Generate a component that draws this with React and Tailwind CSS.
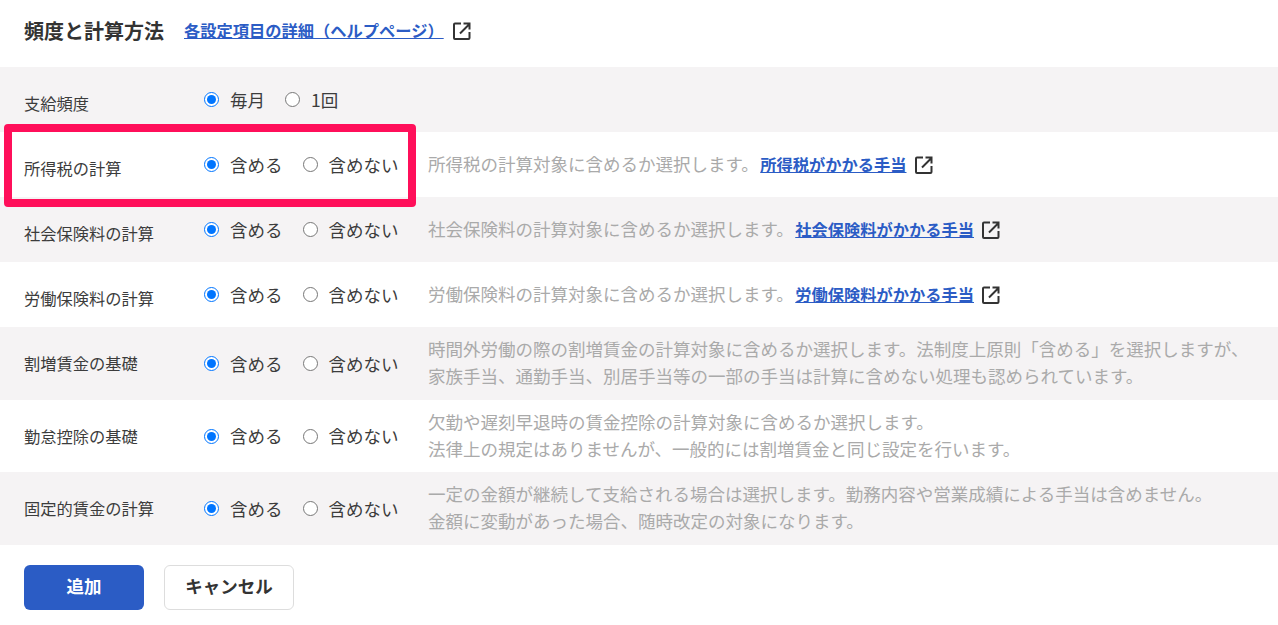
const rows = [
  { label: '支給頻度', options: ['毎月', '1回'], h: 'h-[65px]', gray: true },
  {
    label: '所得税の計算', h: 'h-[65px]',
    desc: ['所得税の計算対象に含めるか選択します。'], link: '所得税がかかる手当',
  },
  {
    label: '社会保険料の計算', h: 'h-[65px]', gray: true,
    desc: ['社会保険料の計算対象に含めるか選択します。'], link: '社会保険料がかかる手当',
  },
  {
    label: '労働保険料の計算', h: 'h-[65px]',
    desc: ['労働保険料の計算対象に含めるか選択します。'], link: '労働保険料がかかる手当',
  },
  {
    label: '割増賃金の基礎', h: 'h-[73px]', gray: true,
    desc: [
      '時間外労働の際の割増賃金の計算対象に含めるか選択します。法制度上原則「含める」を選択しますが、',
      '家族手当、通勤手当、別居手当等の一部の手当は計算に含めない処理も認められています。',
    ],
  },
  {
    label: '勤怠控除の基礎', h: 'h-[72px]',
    desc: [
      '欠勤や遅刻早退時の賃金控除の計算対象に含めるか選択します。',
      '法律上の規定はありませんが、一般的には割増賃金と同じ設定を行います。',
    ],
  },
  {
    label: '固定的賃金の計算', h: 'h-[73px]', gray: true,
    desc: [
      '一定の金額が継続して支給される場合は選択します。勤務内容や営業成績による手当は含めません。',
      '金額に変動があった場合、随時改定の対象になります。',
    ],
  },
];

function ExternalIcon() {
  return (
    <svg width="20" height="20" viewBox="0 0 20 20" fill="none" stroke="#333" strokeWidth="2" className="shrink-0">
      <path d="M9 2.5H3a1 1 0 0 0-1 1V17a1 1 0 0 0 1 1h13.5a1 1 0 0 0 1-1v-6" />
      <path d="M8 12.5L17 3.5M11.5 2.5h6V8.5" />
    </svg>
  );
}

function Radio({ checked, label, name }) {
  return (
    <label className="flex items-center gap-[11px]">
      <input type="radio" name={name} defaultChecked={checked} className="m-0 w-[15px] h-[15px] accent-[#0075ff]" />
      <span className="text-[17.5px] leading-[24px] text-[#3c3c3c]">{label}</span>
    </label>
  );
}

function Row({ row, index }) {
  const opts = row.options || ['含める', '含めない'];
  return (
    <div className={`flex items-center ${row.h} ${row.gray ? 'bg-[#f5f3f4]' : 'bg-white'}`}>
      <div className="self-start w-[204px] pl-6 pt-6 shrink-0 text-[16.25px] leading-6 text-[#3c3c3c]">{row.label}</div>
      <div className="flex items-center gap-5 shrink-0 w-[224px]">
        <Radio name={`r${index}`} checked label={opts[0]} />
        <Radio name={`r${index}`} label={opts[1]} />
      </div>
      {row.desc && (
        <div className="pb-[3px] text-[17.5px] leading-[27px] text-[#aaaaaa] whitespace-nowrap [text-spacing-trim:space-all]">
          {row.desc.map((line, i) => (
            <div key={i} className="flex items-center">
              {line}
              {row.link && (
                <>
                  <a href="#" className="ml-[1.5px] mt-[2px] text-[16.25px] font-bold text-[#2b5cc5] underline">{row.link}</a>
                  <span className="ml-[7px] mt-1"><ExternalIcon /></span>
                </>
              )}
            </div>
          ))}
        </div>
      )}
    </div>
  );
}

export default function App() {
  return (
    <div className="relative w-[1278px] h-[625px] bg-white overflow-hidden" style={{ fontFamily: '"Noto Sans CJK JP", sans-serif' }}>
      <div className="flex items-center h-[67px] pl-6 pb-[6px]">
        <h2 className="text-[20px] leading-7 font-bold text-[#333]">頻度と計算方法</h2>
        <a href="#" className="ml-5 text-[16.25px] font-bold text-[#2b5cc5] underline">各設定項目の詳細（ヘルプページ）</a>
        <span className="ml-2"><ExternalIcon /></span>
      </div>
      {rows.map((row, i) => <Row key={row.label} row={row} index={i} />)}
      <div className="flex gap-5 pl-6 pt-5">
        <button className="w-[120px] h-[45px] pb-[3px] rounded-md bg-[#2b5cc5] text-white text-[17.5px] font-bold">追加</button>
        <button className="w-[130px] h-[45px] pb-[3px] rounded-md bg-white border border-[#dddddd] text-[#333] text-[17.5px] font-bold">キャンセル</button>
      </div>
      <div className="absolute left-[4px] top-[124px] w-[412px] h-[83px] border-[8px] border-[#ff0f5a] rounded-[4px]" />
    </div>
  );
}
